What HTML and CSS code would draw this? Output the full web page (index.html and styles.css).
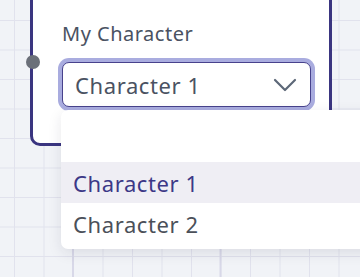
FILE: index.html
```html
<!DOCTYPE html>
<html lang="en">

<head>
    <meta charset="UTF-8">
    <title>Character Node</title>
    <meta name="viewport" content="width=device-width, initial-scale=1">
    <link rel="stylesheet" href="styles.css">
</head>

<body>

    <div class="canvas">
        <div class="node">
            <span class="handle"></span>

            <label class="field-label" for="characterSelect">My Character</label>

            <div class="select-wrap">
                <div class="select-box" id="characterSelect">
                    <span class="select-value">Character 1</span>
                    <svg class="chevron" width="24" height="14" viewBox="0 0 24 14">
                        <path d="M2 2 L12 12 L22 2" fill="none" stroke="#5d6878" stroke-width="2.2" stroke-linecap="round" stroke-linejoin="round"/>
                    </svg>
                </div>

                <ul class="menu">
                    <li class="option empty"></li>
                    <li class="option selected">Character 1</li>
                    <li class="option">Character 2</li>
                </ul>
            </div>
        </div>
    </div>

</body>

</html>
```

FILE: styles.css
```css
* {
    box-sizing: border-box;
}

body {
    margin: 0;
    padding: 0;
    height: 100vh;
    overflow: hidden;
    font-family: "Noto Sans", "Open Sans", sans-serif;
    background-color: #f1f3f7;
    background-image:
        linear-gradient(90deg, #d8d8e8 2px, transparent 2px),
        linear-gradient(90deg, #e1e2ed 1px, transparent 1px),
        linear-gradient(0deg, #e1e2ed 1px, transparent 1px);
    background-size: 147.5px 100%, 29.5px 29.5px, 29.5px 29.5px;
    background-position: 72px 0, 14px 0, 0 21px;
}

.canvas {
    position: relative;
    width: 100%;
    height: 100%;
}

/* node sits on the free canvas */
.node {
    position: absolute;
    left: 30px;
    top: -40px;
    width: 302px;
    height: 186px;
    background: #fff;
    border: 3px solid #3a3580;
    border-radius: 10px;
    padding: 58px 18px 0 29px;
}

.handle {
    position: absolute;
    left: -7px;
    top: 92px;
    width: 14px;
    height: 14px;
    border-radius: 50%;
    background: #6b7079;
}

.field-label {
    display: block;
    font-size: 20px;
    line-height: 26px;
    color: #4a5262;
    letter-spacing: 0.5px;
    margin-bottom: 15px;
}

.select-wrap {
    position: relative;
}

.select-box {
    display: flex;
    align-items: center;
    justify-content: space-between;
    height: 45px;
    padding: 0 13px 0 12px;
    border: 1px solid #47428c;
    border-radius: 7px;
    box-shadow: 0 0 0 4px #a9acdf;
    background: #fff;
}

.select-value {
    font-size: 22px;
    color: #4a5262;
    letter-spacing: 0.6px;
}

.chevron {
    margin-top: 1px;
}

.menu {
    position: absolute;
    left: -1px;
    top: 48px;
    width: 320px;
    margin: 0;
    padding: 0 0 5px;
    list-style: none;
    background: #fff;
    border-radius: 7px;
    box-shadow: 0 4px 14px rgba(30, 30, 60, 0.1);
}

.option {
    height: 41px;
    padding: 0 12px;
    display: flex;
    align-items: center;
    font-size: 22px;
    letter-spacing: 0.6px;
    color: #4b5059;
}

.option.empty {
    height: 52px;
}

.option.selected {
    background: #efeef4;
    color: #3c3887;
}
```
